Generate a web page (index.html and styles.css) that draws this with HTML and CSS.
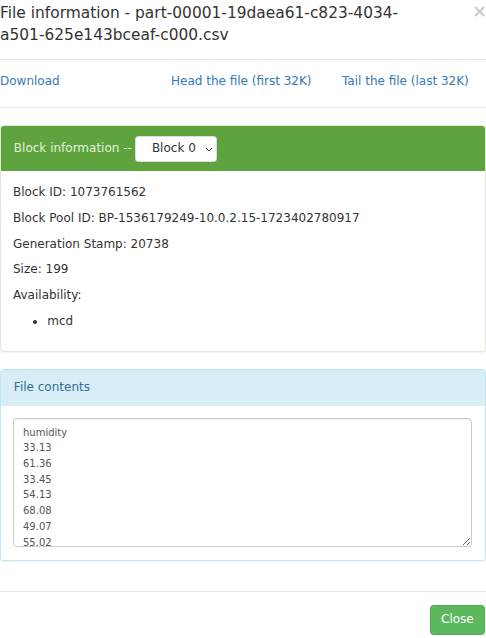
FILE: index.html
```html
<!DOCTYPE html>
<html lang="en">
<head>
<meta charset="utf-8">
<title>File information</title>
<link rel="stylesheet" href="styles.css">
</head>
<body>
<div class="modal-content">
  <div class="modal-header">
    <h4 class="modal-title">File information - part-00001-19daea61-c823-4034-a501-625e143bceaf-c000.csv</h4>
    <span class="close">×</span>
  </div>
  <div class="modal-body">
    <div class="links">
      <a href="#">Download</a>
      <a href="#">Head the file (first 32K)</a>
      <a href="#">Tail the file (last 32K)</a>
    </div>
    <hr>
    <div class="panel panel-success">
      <div class="panel-heading heading-success">
        <span>Block information --</span>
        <span class="select">
          <span>Block 0</span>
          <svg class="chev" width="8" height="5" viewBox="0 0 8 5"><polyline points="1,1 4,4 7,1" fill="none" stroke="#444" stroke-width="1"/></svg>
        </span>
      </div>
      <div class="panel-body">
        <p>Block ID: 1073761562</p>
        <p>Block Pool ID: BP-1536179249-10.0.2.15-1723402780917</p>
        <p>Generation Stamp: 20738</p>
        <p>Size: 199</p>
        <p>Availability:</p>
        <ul>
          <li>mcd</li>
        </ul>
      </div>
    </div>
    <div class="panel panel-info">
      <div class="panel-heading heading-info">File contents</div>
      <div class="panel-body">
        <textarea class="contents" readonly>humidity
33.13
61.36
33.45
54.13
68.08
49.07
55.02</textarea>
      </div>
    </div>
  </div>
  <div class="modal-footer">
    <button class="btn-success" type="button">Close</button>
  </div>
</div>
</body>
</html>
```
FILE: styles.css
```css
* { box-sizing: border-box; }
html, body { margin: 0; padding: 0; background: #fff; }
body {
  font-family: "DejaVu Sans", sans-serif;
  font-size: 12px;
  line-height: 17.14px;
  color: #333;
  width: 486px;
  overflow: hidden;
}
.modal-header {
  display: flex;
  justify-content: space-between;
  align-items: flex-start;
  padding: 2px 0 12.86px;
  border-bottom: 1px solid #e5e5e5;
}
.modal-title {
  margin: 0;
  width: 420px;
  font-size: 15.43px;
  line-height: 22px;
  font-weight: normal;
  color: #333;
}
.close {
  font-size: 18px;
  font-weight: bold;
  line-height: 1;
  color: #000;
  opacity: .2;
  margin: 0 -1px 0 0;
}
.modal-body { padding: 12.86px 0; }
.links {
  display: grid;
  grid-template-columns: 171px 171px auto;
}
a { color: #337ab7; text-decoration: none; }
hr {
  margin: 17.14px 0;
  border: 0;
  border-top: 1px solid #eee;
}
.panel {
  background: #fff;
  border: 1px solid #ddd;
  border-radius: 3.4px;
  box-shadow: 0 1px 1px rgba(0,0,0,.05);
  margin-bottom: 17.14px;
}
.panel-success { border-color: #dfe8d6; }
.panel-info { border-color: #bce8f1; }
.panel-heading {
  padding: 8.57px 12.86px;
  border-radius: 3px 3px 0 0;
}
.heading-success {
  display: flex;
  align-items: center;
  padding-top: 9.6px;
  padding-bottom: 9.6px;
  background: #5fa33e;
  color: #e2f1da;
}
.heading-info {
  background: #d9edf7;
  color: #31708f;
  border-bottom: 1px solid #d9edf7;
}
.select {
  display: flex;
  align-items: center;
  margin-left: 3px;
  width: 82px;
  height: 26px;
  padding-left: 16px;
  background: #fff;
  border: 1px solid #ddd;
  border-radius: 3.4px;
  color: #333;
}
.chev { margin-left: 9px; margin-top: 1px; }
.panel-body { padding: 12.86px 12.86px 12.86px 12px; }
.panel-body p { margin: 0 0 8.57px; }
.panel-body ul { margin: 0 0 8.57px; padding-left: 34.3px; }
.contents {
  display: block;
  width: 100%;
  height: 129px;
  margin: 0;
  padding: 5.14px 9px;
  font-family: "DejaVu Sans", sans-serif;
  font-size: 10px;
  line-height: 15.71px;
  color: #555;
  background: #fff;
  border: 1px solid #ccc;
  border-radius: 3.4px;
  box-shadow: inset 0 1px 1px rgba(0,0,0,.075);
  resize: vertical;
  overflow: hidden;
  outline: none;
}
.modal-footer {
  border-top: 1px solid #e5e5e5;
  padding: 12.86px 0;
  text-align: right;
}
.btn-success {
  font-family: "DejaVu Sans", sans-serif;
  font-size: 12px;
  line-height: 17.14px;
  padding: 5.14px 10.28px;
  color: #fff;
  background: #5cb85c;
  border: 1px solid #4cae4c;
  border-radius: 3.4px;
  margin-right: 1px;
}
```
